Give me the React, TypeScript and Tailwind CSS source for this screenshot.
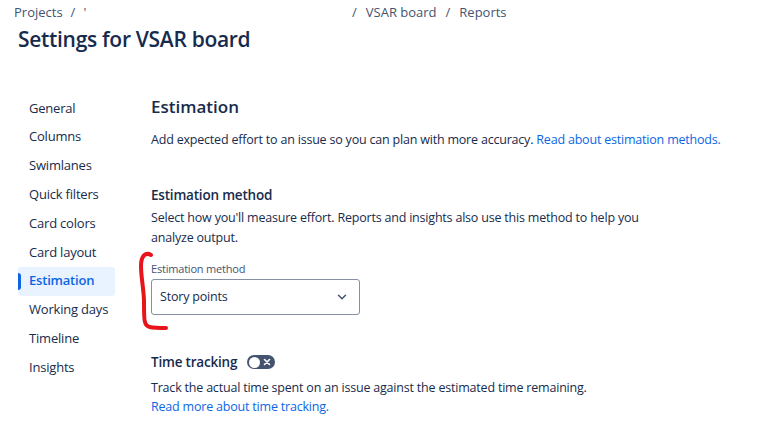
import { ChevronDown } from "lucide-react";

const NAV = [
  "General",
  "Columns",
  "Swimlanes",
  "Quick filters",
  "Card colors",
  "Card layout",
  "Estimation",
  "Working days",
  "Timeline",
  "Insights",
];

function Toggle() {
  return (
    <span className="inline-flex items-center w-[28px] h-[14px] rounded-full bg-[#44546F] px-[2px] relative">
      <span className="w-[11px] h-[11px] rounded-full bg-white" />
      <svg className="absolute right-[4px] top-[3px]" width="8" height="8" viewBox="0 0 8 8">
        <path d="M1.5 1.5 L6.5 6.5 M6.5 1.5 L1.5 6.5" stroke="white" strokeWidth="1.6" strokeLinecap="round" />
      </svg>
    </span>
  );
}

export default function App() {
  return (
    <div
      className="w-[759px] h-[444px] bg-white text-[#172B4D] overflow-hidden relative"
      style={{ fontFamily: "'Open Sans', 'Noto Sans', sans-serif" }}
    >
      {/* breadcrumbs */}
      <div className="flex items-center h-[24px] pt-[1px] text-[13px] text-[#44546F]">
        <div className="pl-[14px] w-[352px] flex gap-[8px]">
          <span>Projects</span>
          <span>/</span>
          <span>'</span>
        </div>
        <div className="flex gap-[9px]">
          <span>/</span>
          <span>VSAR board</span>
          <span>/</span>
          <span>Reports</span>
        </div>
      </div>
      <h1 className="pl-[18px] text-[21px] font-semibold leading-[30px] tracking-[-0.3px]">
        Settings for VSAR board
      </h1>

      <div className="flex mt-[40px]">
        {/* sidebar */}
        <nav className="pl-[18px] w-[151px] flex flex-col">
          {NAV.map((n) => {
            const active = n === "Estimation";
            return (
              <div
                key={n}
                className={
                  "relative h-[28.8px] flex items-center pl-[11px] text-[13px] w-[97px] rounded-[3px] tracking-[-0.2px] " +
                  (active ? "bg-[#E9F2FF] text-[#0C66E4] font-semibold" : "text-[#172B4D]")
                }
              >
                {active && <span className="absolute left-0 top-[6px] bottom-[6px] w-[3px] rounded-r bg-[#0C66E4]" />}
                {n}
              </div>
            );
          })}
        </nav>

        {/* content */}
        <main className="flex-1 text-[12.5px] tracking-[-0.2px] relative">
          <h2 className="text-[17px] font-semibold leading-[24px] mt-[1px] tracking-normal">Estimation</h2>
          <p className="mt-[11px] leading-[20px]">
            Add expected effort to an issue so you can plan with more accuracy.{" "}
            <span className="text-[#0C66E4]">Read about estimation methods.</span>
          </p>

          <h3 className="mt-[35px] font-semibold text-[13.5px] leading-[20px]">Estimation method</h3>
          <p className="mt-[3px] leading-[20px] w-[490px]">
            Select how you'll measure effort. Reports and insights also use this method to help you
            analyze output.
          </p>

          <div className="mt-[13px] text-[11px] text-[#44546F] leading-[16px]">Estimation method</div>
          <div className="mt-[2px] w-[209px] h-[36px] border border-[#8590A2] rounded-[3px] flex items-center justify-between pl-[8px] pr-[10px]">
            <span>Story points</span>
            <ChevronDown size={14} strokeWidth={2.5} className="text-[#44546F]" />
          </div>

          <div className="mt-[37px] flex items-center gap-[10px]">
            <span className="font-semibold text-[13.5px] leading-[20px]">Time tracking</span>
            <Toggle />
          </div>
          <p className="mt-[6px] leading-[19px]">
            Track the actual time spent on an issue against the estimated time remaining.
            <br />
            <span className="text-[#0C66E4]">Read more about time tracking.</span>
          </p>

          {/* red marker annotation */}
          <svg className="absolute left-[-15px] top-[156px]" width="34" height="84" viewBox="0 0 34 84">
            <path
              d="M15 5 C10 2 5 5 5 16 C5 28 8 40 8 52 C8 62 8 70 9 72 C10 78 16 78 30 78"
              fill="none"
              stroke="#E8141B"
              strokeWidth="4"
              strokeLinecap="round"
            />
          </svg>
        </main>
      </div>
    </div>
  );
}
